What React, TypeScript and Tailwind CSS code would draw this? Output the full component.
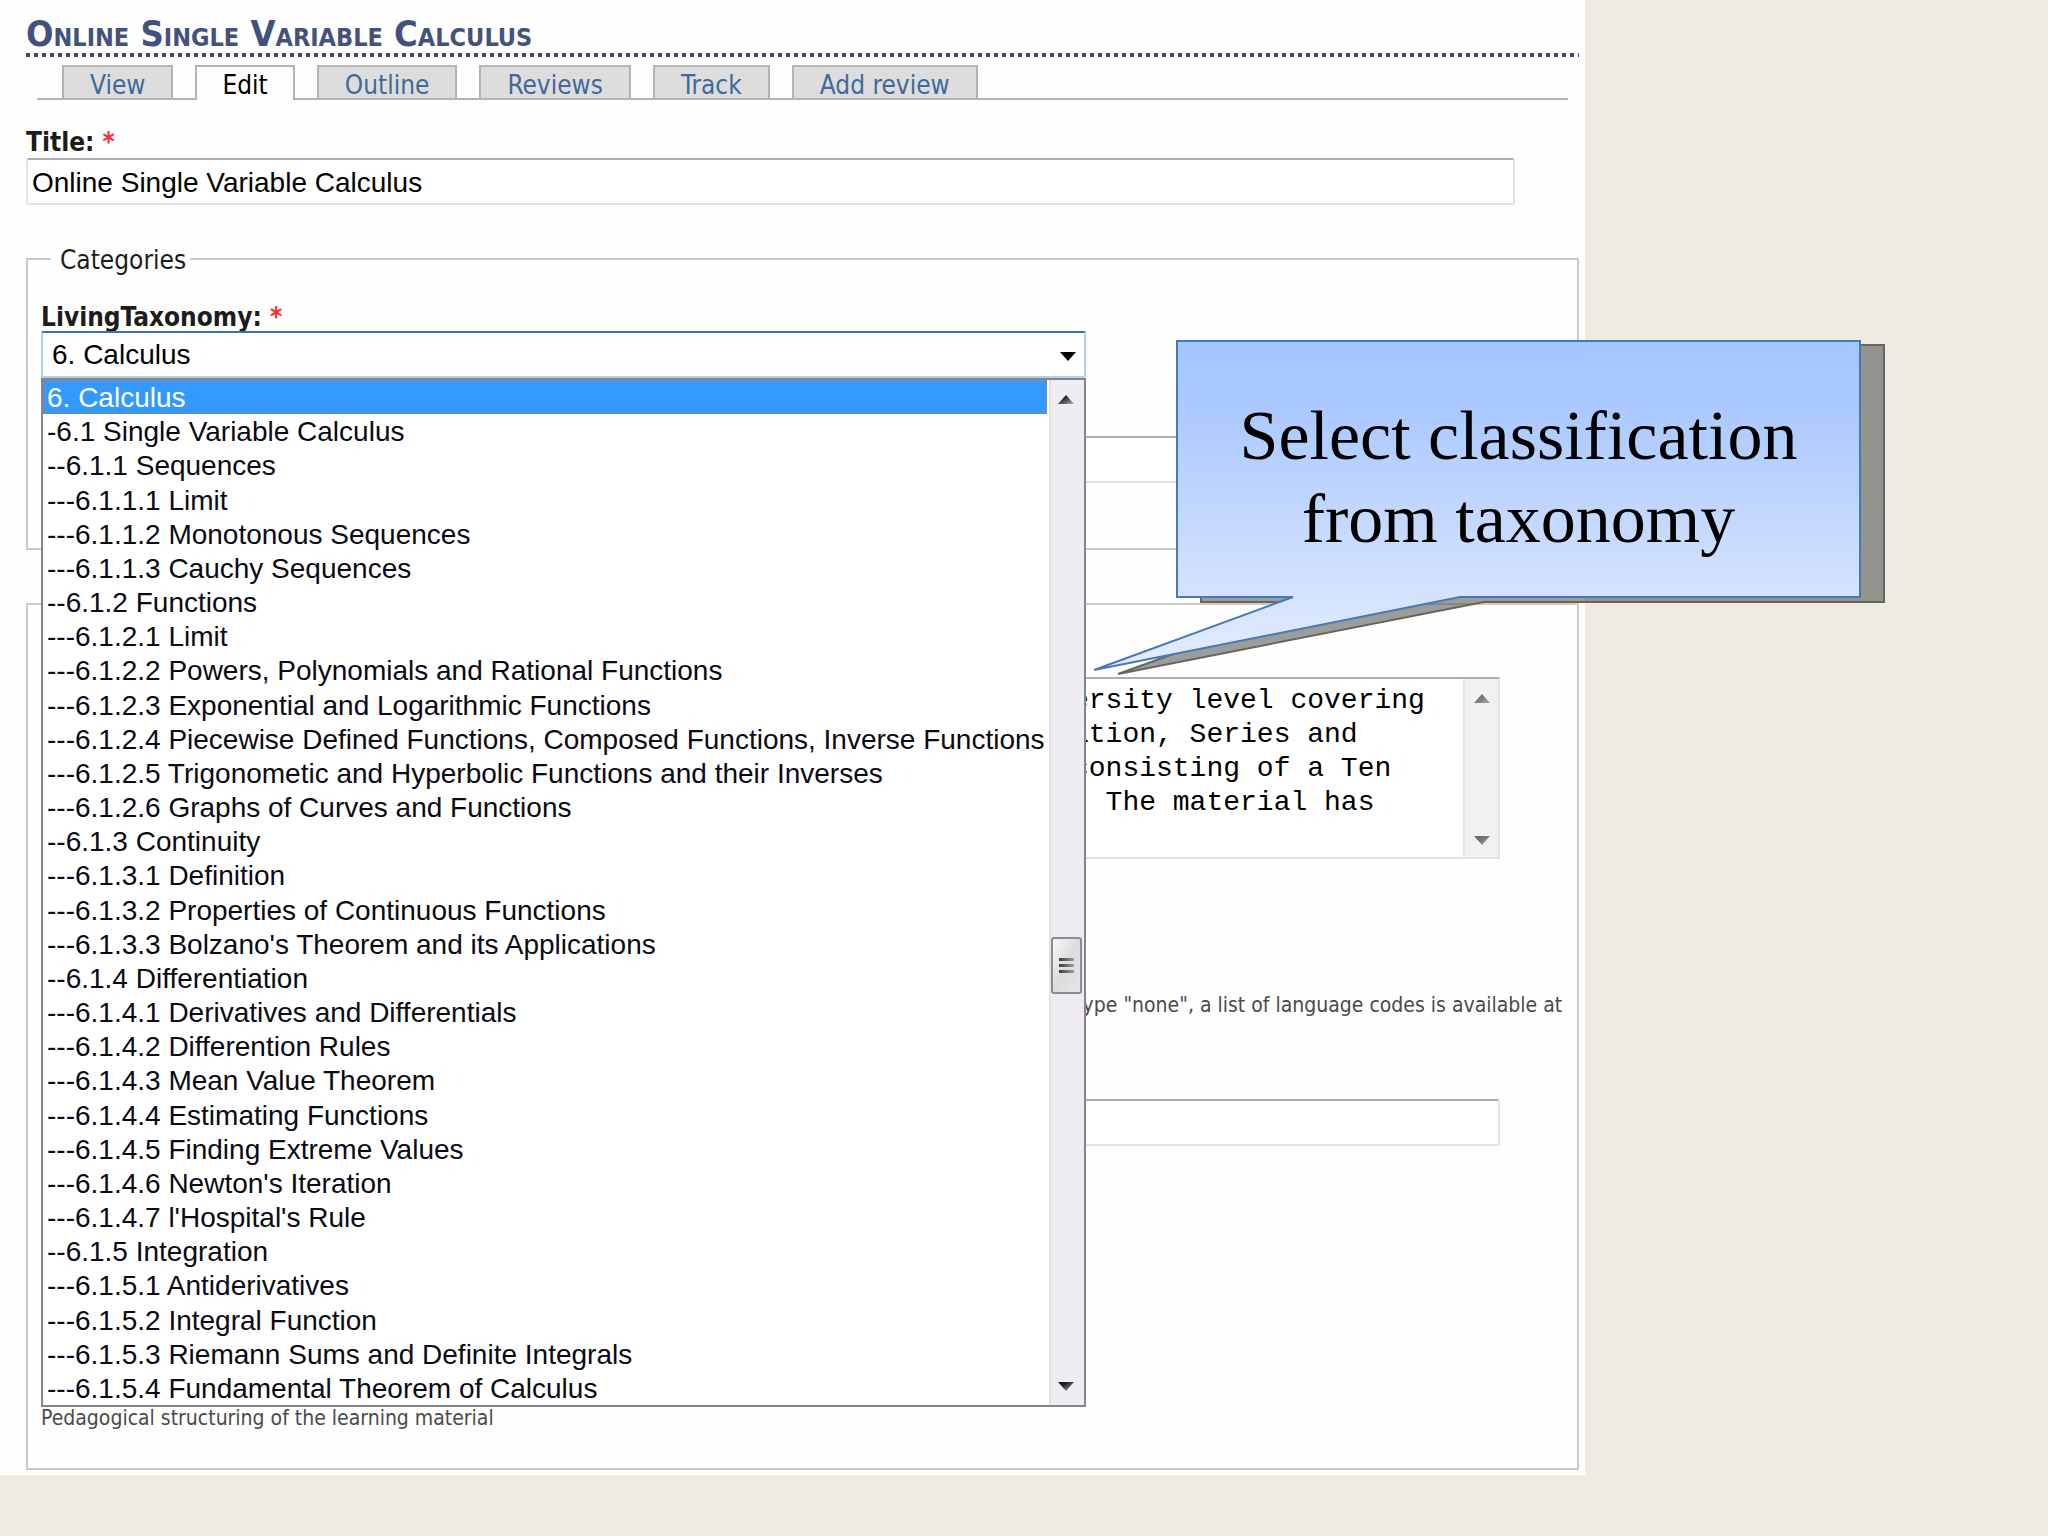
import React, { useState } from 'react'

const tabs = ['View', 'Edit', 'Outline', 'Reviews', 'Track', 'Add review']

const taxonomy = [
  '6. Calculus',
  '-6.1 Single Variable Calculus',
  '--6.1.1 Sequences',
  '---6.1.1.1 Limit',
  '---6.1.1.2 Monotonous Sequences',
  '---6.1.1.3 Cauchy Sequences',
  '--6.1.2 Functions',
  '---6.1.2.1 Limit',
  '---6.1.2.2 Powers, Polynomials and Rational Functions',
  '---6.1.2.3 Exponential and Logarithmic Functions',
  '---6.1.2.4 Piecewise Defined Functions, Composed Functions, Inverse Functions',
  '---6.1.2.5 Trigonometic and Hyperbolic Functions and their Inverses',
  '---6.1.2.6 Graphs of Curves and Functions',
  '--6.1.3 Continuity',
  '---6.1.3.1 Definition',
  '---6.1.3.2 Properties of Continuous Functions',
  "---6.1.3.3 Bolzano's Theorem and its Applications",
  '--6.1.4 Differentiation',
  '---6.1.4.1 Derivatives and Differentials',
  '---6.1.4.2 Differention Rules',
  '---6.1.4.3 Mean Value Theorem',
  '---6.1.4.4 Estimating Functions',
  '---6.1.4.5 Finding Extreme Values',
  "---6.1.4.6 Newton's Iteration",
  "---6.1.4.7 l'Hospital's Rule",
  '--6.1.5 Integration',
  '---6.1.5.1 Antiderivatives',
  '---6.1.5.2 Integral Function',
  '---6.1.5.3 Riemann Sums and Definite Integrals',
  '---6.1.5.4 Fundamental Theorem of Calculus',
]

const summary = 'ersity level covering\nation, Series and\nconsisting of a Ten\n  The material has'

const inputClass =
  'block h-[47px] rounded-[3px] border-2 border-[#e2e3ea] border-t-[#abadb3] bg-white px-1 pt-0.5 font-["Liberation_Sans",Arial,sans-serif] text-[28px] text-black outline-none'

function Arrow({ up, from, to }: { up?: boolean; from: string; to: string }) {
  const id = `arrow-${up ? 'up' : 'down'}-${from.slice(1)}`
  return (
    <svg viewBox="0 0 16 9" className="h-[9px] w-4" aria-hidden="true">
      <defs>
        <linearGradient id={id} x1="0" y1="0" x2="1" y2="1">
          <stop offset="0.3" stopColor={from} />
          <stop offset="1" stopColor={to} />
        </linearGradient>
      </defs>
      <path fill={`url(#${id})`} d={up ? 'M8 0 L16 9 H0 Z' : 'M0 0 H16 L8 9 Z'} />
    </svg>
  )
}

function Tabs() {
  return (
    <nav className="ml-[11px] mr-[11px] mt-2 flex h-[35px] items-stretch gap-[22px] border-b-2 border-[#b4b4b6] pl-[25px]">
      {tabs.map((tab) => (
        <a
          key={tab}
          href="#"
          className={
            tab === 'Edit'
              ? '-mb-0.5 border-2 border-b-0 border-[#b4b4b6] bg-[#fefefe] px-[25px] text-[26px] leading-9 text-black'
              : 'border-2 border-b-0 border-[#b4b4b6] bg-[#dddddd] px-[26px] text-[26px] leading-9 text-[#41699b]'
          }
        >
          {tab}
        </a>
      ))}
    </nav>
  )
}

function TaxonomyList({ value, onPick }: { value: string; onPick: (v: string) => void }) {
  return (
    <div className="absolute left-0 top-full z-10 flex h-[1029px] w-full border-2 border-[#858589] bg-white">
      <ul
        role="listbox"
        aria-label="LivingTaxonomy"
        className='grid min-w-0 grow auto-rows-fr grid-cols-1 font-["Liberation_Sans",Arial,sans-serif] text-[28px] leading-9'
      >
        {taxonomy.map((term) => (
          <li
            key={term}
            role="option"
            aria-selected={term === value}
            onClick={() => onPick(term)}
            className={
              term === value
                ? 'mr-0.5 h-[34px] whitespace-nowrap border border-dotted border-[#c8782d] bg-[#3399ff] px-[3px] leading-[34px] text-white'
                : 'mr-0.5 h-[34px] whitespace-nowrap px-1 text-[#0a0a14]'
            }
          >
            {term}
          </li>
        ))}
      </ul>
      <div className="flex w-[35px] shrink-0 flex-col items-center border-l-2 border-[#e3e2e6] bg-[#efedf1] pr-0.5">
        <div className="flex h-[38px] items-center">
          <Arrow up from="#1c1c1c" to="#b0b0b0" />
        </div>
        <div className="mb-auto mt-[519px] flex h-[57px] w-[31px] flex-col items-center justify-center gap-[3px] rounded-[3px] border-2 border-[#8b8b90] bg-linear-to-br from-[#f8f8f9] via-[#dcdcdf] to-[#e6e6e8]">
          <span className="h-[3px] w-[15px] bg-linear-to-r from-[#3c3c3e] to-[#a0a0a3]" />
          <span className="h-[3px] w-[15px] bg-linear-to-r from-[#3c3c3e] to-[#a0a0a3]" />
          <span className="h-[3px] w-[15px] bg-linear-to-r from-[#3c3c3e] to-[#a0a0a3]" />
        </div>
        <div className="flex h-[38px] items-center">
          <Arrow from="#1c1c1c" to="#b0b0b0" />
        </div>
      </div>
    </div>
  )
}

function Callout() {
  return (
    <aside className="absolute left-[1091px] top-[339px] z-20 h-[340px] w-[796px]">
      <svg viewBox="0 0 796 340" className="absolute inset-0 size-full" aria-hidden="true">
        <defs>
          <linearGradient id="balloon" x1="0" y1="0" x2="0" y2="1">
            <stop offset="0" stopColor="#a5c5ff" />
            <stop offset="0.2" stopColor="#abc9ff" />
            <stop offset="1" stopColor="#e5edff" />
          </linearGradient>
        </defs>
        <path
          d="M110 6 H793 V263 H393 L27 335 L226 263 H110 Z"
          fill="#555552"
          fillOpacity="0.58"
          stroke="#66665f"
          strokeWidth="2"
        />
        <path
          d="M86 2 H769 V258 H369 L3 331 L202 258 H86 Z"
          fill="url(#balloon)"
          stroke="#4579b8"
          strokeWidth="2"
        />
      </svg>
      <p className='relative ml-[86px] w-[683px] pt-[55px] text-center font-["Liberation_Serif","Times_New_Roman",serif] text-[70px] leading-[83px] text-black'>
        Select classification
        <br />
        from taxonomy
      </p>
    </aside>
  )
}

export default function App() {
  const [title, setTitle] = useState('Online Single Variable Calculus')
  const [term, setTerm] = useState('6. Calculus')

  return (
    <div className='relative min-h-screen bg-[#edebe2] font-["DejaVu_Sans_Condensed","Noto_Sans",sans-serif]'>
      <main className="w-[77.4%] bg-[#fefefe] pb-[5px] pl-[26px] pr-[6px] pt-[14px] text-[26px] text-[#1c1c1c]">
        <h1 className="text-[36px] font-bold leading-[39px] text-[#42527c] [font-variant:small-caps]">
          Online Single Variable Calculus
        </h1>
        <div className="h-1 bg-[repeating-linear-gradient(to_right,#45466f_0_4px,transparent_4px_8px)]" />
        <Tabs />

        <form>
          <label htmlFor="title" className="mt-[26px] block font-bold leading-8">
            Title: <span className="text-[#ff2a2a]">*</span>
          </label>
          <div className="mr-16">
            <input
              id="title"
              value={title}
              onChange={(e) => setTitle(e.target.value)}
              className={`${inputClass} w-full`}
            />
          </div>

          <fieldset className="mt-[35px] border-2 border-[#cbcbcf] px-[13px] pb-[65px]">
            <legend className="ml-[10px] pl-[9px] pr-1 pt-[3px] leading-[34px]">Categories</legend>
            <label htmlFor="taxonomy" className="mt-[26px] block font-bold leading-7">
              LivingTaxonomy: <span className="text-[#ff2a2a]">*</span>
            </label>
            <div className="relative w-[68.6%]">
              <select
                id="taxonomy"
                value={term}
                onChange={(e) => setTerm(e.target.value)}
                className='block h-[47px] w-full appearance-none rounded-[2px] border-2 border-[#a9d3f0] border-t-[#3c72ab] bg-white px-[9px] font-["Liberation_Sans",Arial,sans-serif] text-[28px] text-black outline-none'
              >
                {taxonomy.map((t) => (
                  <option key={t}>{t}</option>
                ))}
              </select>
              <span className="pointer-events-none absolute right-[10px] top-[21px]">
                <Arrow from="#000000" to="#000000" />
              </span>
              <TaxonomyList value={term} onPick={setTerm} />
            </div>
            <div className="mr-16 mt-[58px]">
              <input aria-label="Keywords" className={`${inputClass} w-full`} />
            </div>
          </fieldset>

          <fieldset className="mt-[53px] border-2 border-[#cbcbcf] px-[13px] pb-9 pt-[72px]">
            <div className="mr-16 flex h-[182px] border-2 border-[#e2e3ea] border-t-[#abadb3] bg-white">
              <textarea
                aria-label="Description"
                defaultValue={summary}
                className='block grow resize-none overflow-hidden whitespace-pre pl-[1029px] pt-[5px] font-["Liberation_Mono","Courier_New",monospace] text-[28px] leading-[34px] text-black outline-none'
              />
              <div className="flex w-[35px] flex-col items-center justify-between border-l-2 border-[#e6e6e9] bg-[#f1f0f3] pb-3 pt-[15px]">
                <Arrow up from="#6c6c6e" to="#a8a8aa" />
                <Arrow from="#6c6c6e" to="#a8a8aa" />
              </div>
            </div>
            <p className="mr-0.5 mt-[132px] text-right text-[21px] leading-7 text-[#4a4a4a]">
              type "none", a list of language codes is available at
            </p>
            <div className="mr-16 mt-20">
              <input aria-label="Structure" className={`${inputClass} w-full`} />
            </div>
            <p className="mt-[258px] text-[21px] leading-7 text-[#4a4a4a]">
              Pedagogical structuring of the learning material
            </p>
          </fieldset>
        </form>
      </main>
      <Callout />
    </div>
  )
}
